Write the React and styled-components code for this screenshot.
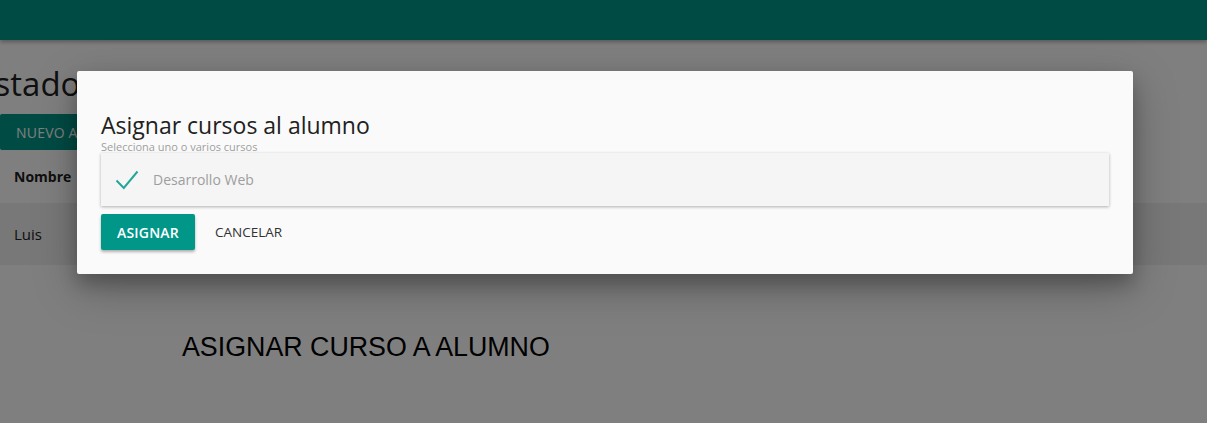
import React from "react";
import styled, { createGlobalStyle } from "styled-components";

const GlobalStyle = createGlobalStyle`
  html, body { margin: 0; padding: 0; }
  body {
    font-family: "Open Sans", "Noto Sans", sans-serif;
    background: #ffffff;
    color: #212121;
    overflow: hidden;
  }
`;

const Page = styled.div`
  width: 1207px;
  height: 423px;
  position: relative;
  overflow: hidden;
`;

const TopBar = styled.header`
  height: 40px;
  background: #009688;
  box-shadow: 0 2px 4px rgba(0, 0, 0, 0.3);
`;

const Content = styled.main`
  display: flex;
  flex-direction: column;
  align-items: flex-start;
`;

const PageTitle = styled.h1`
  margin: 20px 0 0 -31px;
  font-size: 33px;
  font-weight: 400;
  line-height: 48px;
  height: 48px;
  color: #212121;
  white-space: nowrap;
`;

const PrimaryButton = styled.button`
  height: 36px;
  padding: 0 16px;
  border: none;
  border-radius: 2px;
  background: #009688;
  color: #ffffff;
  font-family: inherit;
  font-size: 14px;
  font-weight: ${(p) => (p.$bold ? 600 : 400)};
  text-transform: uppercase;
  letter-spacing: 0.2px;
  box-shadow: ${(p) => (p.$raised ? "0 2px 3px rgba(0,0,0,0.3)" : "none")};
  cursor: pointer;
`;

const TopButton = styled(PrimaryButton)`
  margin-top: 6px;
  width: 180px;
  text-align: left;
`;

const Table = styled.table`
  width: 100%;
  border-collapse: collapse;
`;

const HeadCell = styled.th`
  height: 53px;
  padding: 0 14px;
  text-align: left;
  font-size: 14px;
  font-weight: 700;
  color: #212121;
`;

const Row = styled.tr`
  background: ${(p) => (p.$striped ? "#f0f0f0" : "transparent")};
`;

const Cell = styled.td`
  height: 62px;
  padding: 0 14px;
  font-size: 15px;
  color: #212121;
`;

const SectionTitle = styled.h2`
  margin: 67px 0 0 182px;
  font-family: "Liberation Sans", Arial, sans-serif;
  font-size: 26.8px;
  font-weight: 400;
  color: #000000;
`;

const Overlay = styled.div`
  position: absolute;
  inset: 0;
  background: rgba(0, 0, 0, 0.5);
`;

const Dialog = styled.div`
  position: absolute;
  left: 77px;
  top: 71px;
  width: 1056px;
  box-sizing: border-box;
  padding: 38px 24px 24px;
  background: #fafafa;
  border-radius: 2px;
  box-shadow: 0 14px 45px rgba(0, 0, 0, 0.25), 0 10px 18px rgba(0, 0, 0, 0.22);
  display: flex;
  flex-direction: column;
`;

const DialogTitle = styled.h3`
  margin: 0;
  font-size: 23px;
  font-weight: 400;
  line-height: 32px;
  color: #212121;
`;

const Hint = styled.div`
  font-size: 11px;
  line-height: 12px;
  height: 12px;
  color: #9e9e9e;
  overflow: visible;
`;

const OptionList = styled.div`
  position: relative;
  background: #f5f5f5;
  box-shadow: 0 1px 3px rgba(0, 0, 0, 0.3);
`;

const Option = styled.div`
  height: 53px;
  display: flex;
  align-items: center;
  gap: 14px;
  padding-left: 14px;
  font-size: 14px;
  color: #9e9e9e;
`;

const Actions = styled.div`
  display: flex;
  align-items: center;
  gap: 8px;
  margin-top: 8px;
`;

const FlatButton = styled.button`
  height: 36px;
  padding: 0 12px;
  border: none;
  background: transparent;
  color: #333333;
  font-family: inherit;
  font-size: 13.5px;
  text-transform: uppercase;
  cursor: pointer;
`;

const Check = () => (
  <svg width="24" height="20" viewBox="0 0 24 20" aria-hidden="true">
    <path d="M1.5 10.5 L8.8 18 L22.5 1.5" fill="none" stroke="#26a69a" strokeWidth="2" />
  </svg>
);

export default function App() {
  return (
    <Page>
      <GlobalStyle />
      <TopBar />
      <Content>
        <PageTitle>Listado de alumnos</PageTitle>
        <TopButton>Nuevo alumno</TopButton>
        <Table>
          <thead>
            <tr>
              <HeadCell>Nombre</HeadCell>
            </tr>
          </thead>
          <tbody>
            <Row $striped>
              <Cell>Luis</Cell>
            </Row>
          </tbody>
        </Table>
        <SectionTitle>ASIGNAR CURSO A ALUMNO</SectionTitle>
      </Content>
      <Overlay />
      <Dialog>
        <DialogTitle>Asignar cursos al alumno</DialogTitle>
        <Hint>Selecciona uno o varios cursos</Hint>
        <OptionList>
          <Option>
            <Check />
            Desarrollo Web
          </Option>
        </OptionList>
        <Actions>
          <PrimaryButton $bold $raised>Asignar</PrimaryButton>
          <FlatButton>Cancelar</FlatButton>
        </Actions>
      </Dialog>
    </Page>
  );
}
